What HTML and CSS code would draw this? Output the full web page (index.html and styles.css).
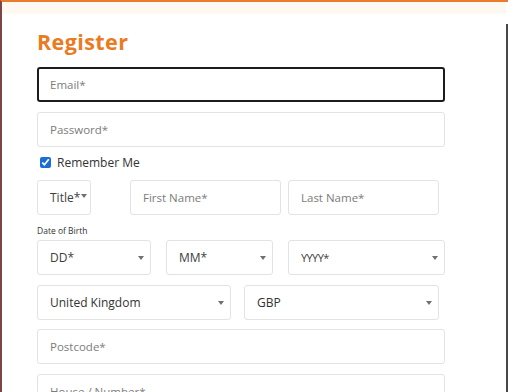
FILE: index.html
```html
<!DOCTYPE html>
<html lang="en">
<head>
<meta charset="utf-8">
<title>Register</title>
<link rel="stylesheet" href="styles.css">
</head>
<body>
<div class="frame">
  <main class="content">
    <h1 class="title">Register</h1>
    <div class="field field-focus mb10"><span class="ph">Email*</span></div>
    <div class="field mb8"><span class="ph">Password*</span></div>
    <label class="remember mb11"><input type="checkbox" class="check" checked><span>Remember Me</span></label>
    <div class="row mb10">
      <div class="field select w-title"><span class="val">Title*</span><span class="caret caret-tight"></span></div>
      <div class="field w-first ml39"><span class="ph">First Name*</span></div>
      <div class="field w-last ml7"><span class="ph">Last Name*</span></div>
    </div>
    <div class="label">Date of Birth</div>
    <div class="row mb10">
      <div class="field select w-dd"><span class="val">DD*</span><span class="caret"></span></div>
      <div class="field select w-mm ml15"><span class="val">MM*</span><span class="caret"></span></div>
      <div class="field select w-yy ml15"><span class="val small">YYYY*</span><span class="caret"></span></div>
    </div>
    <div class="row mb9">
      <div class="field select w-country"><span class="val dark">United Kingdom</span><span class="caret"></span></div>
      <div class="field select w-cur ml13"><span class="val dark">GBP</span><span class="caret"></span></div>
    </div>
    <div class="field mb10"><span class="ph">Postcode*</span></div>
    <div class="field"><span class="ph">House / Number*</span></div>
  </main>
  <div class="rail"></div>
</div>
</body>
</html>
```
FILE: styles.css
```css
html, body {
  margin: 0;
  padding: 0;
  background: #ffffff;
  overflow: hidden;
}

body {
  font-family: "Open Sans", "Noto Sans", Arial, sans-serif;
}

.frame {
  display: flex;
  height: 392px;
  box-sizing: border-box;
  border-top: 2px solid #e97c2c;
  border-left: 2px solid #7d4545;
}

.content {
  flex: 1;
  padding-left: 35px;
  display: flex;
  flex-direction: column;
  align-items: flex-start;
  background: linear-gradient(#fdf8f2 0, #fdf8f2 12px, #ffffff 12px);
}

.rail {
  width: 2px;
  margin-top: 22px;
  background: #474747;
}

.title {
  margin: 28px 0 13px;
  font-size: 21.5px;
  line-height: 24px;
  font-weight: 700;
  letter-spacing: 0.4px;
  color: #ea7b22;
}

.field {
  width: 408px;
  height: 35px;
  box-sizing: border-box;
  border: 1px solid #e3e3e3;
  border-radius: 3px;
  padding: 0 12px;
  display: flex;
  align-items: center;
  font-size: 11.5px;
  flex-shrink: 0;
}

.field-focus {
  border: 2px solid #1c1c1c;
  padding-left: 11px;
}

.ph {
  color: #7c7c7c;
}

.val {
  color: #3e3e3e;
  font-size: 12px;
}

.val.small {
  font-size: 11px;
  letter-spacing: -0.6px;
}

.val.dark {
  color: #333333;
  font-size: 12px;
}

.select {
  justify-content: space-between;
  padding-right: 6px;
}

.caret {
  width: 0;
  height: 0;
  border-left: 3.5px solid transparent;
  border-right: 3.5px solid transparent;
  border-top: 4px solid #707070;
}

.caret-tight {
  margin-left: 1px;
  margin-top: -4px;
}

.w-title { width: 54px; padding-right: 6px; justify-content: flex-start; }
.w-first { width: 151px; }
.w-last { width: 151px; }
.w-dd { width: 114px; }
.w-mm { width: 107px; }
.w-yy { width: 157px; }
.w-country { width: 194px; }
.w-cur { width: 195px; }

.row {
  display: flex;
}

.ml7 { margin-left: 7px; }
.ml13 { margin-left: 13px; }
.ml15 { margin-left: 15px; }
.ml39 { margin-left: 39px; }

.mb8 { margin-bottom: 8px; }
.mb9 { margin-bottom: 9px; }
.mb10 { margin-bottom: 10px; }
.mb11 { margin-bottom: 11px; }

.remember {
  display: flex;
  align-items: center;
  height: 14px;
  font-size: 12px;
  color: #333333;
  padding-left: 3px;
}

.check {
  width: 11px;
  height: 11px;
  margin: 0 6px 0 0;
  accent-color: #1a6fd6;
}

.label {
  font-size: 8.5px;
  line-height: 12px;
  height: 12px;
  color: #333333;
  margin-bottom: 3px;
}
```
